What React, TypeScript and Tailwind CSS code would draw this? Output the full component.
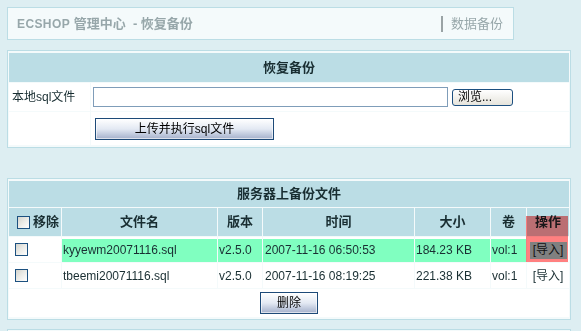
// App.tsx
const FONT = "font-['Liberation_Sans','Noto_Sans_CJK_SC',sans-serif]";

interface BackupFile {
  name: string;
  version: string;
  time: string;
  size: string;
  vol: string;
  hover?: boolean;
}

const FILES: BackupFile[] = [
  { name: "kyyewm20071116.sql", version: "v2.5.0", time: "2007-11-16 06:50:53", size: "184.23 KB", vol: "vol:1", hover: true },
  { name: "tbeemi20071116.sql", version: "v2.5.0", time: "2007-11-16 08:19:25", size: "221.38 KB", vol: "vol:1" },
];

function CheckBox() {
  return (
    <span className="inline-block h-[13px] w-[13px] shrink-0 border border-[#1c5180] bg-linear-to-br from-[#d4d4cd] via-[#ececE8] to-white" />
  );
}

function BlueButton({ label, width }: { label: string; width: string }) {
  return (
    <button
      type="button"
      className={`${width} h-[22px] border border-[#1d4a78] bg-linear-to-b from-white via-[#e3e9f3] to-[#a4b0cb] text-[12px] leading-none text-black shadow-[inset_0_0_0_1px_rgba(255,255,255,0.6)]`}
    >
      {label}
    </button>
  );
}

export default function App() {
  const th = "bg-[#BBDDE5] text-[13px] font-bold text-[#192E32]";
  const td = "px-px text-[12px] text-[#192E32] whitespace-nowrap";

  return (
    <div className={`${FONT} h-[331px] w-[581px] overflow-hidden bg-[#DDEEF2] pl-[7px] pt-[7px]`}>
      {/* title bar */}
      <div className="flex h-[33px] w-[507px] items-center justify-between border border-[#BBDDE5] bg-[#F4FAFB] pl-[9px] pr-[10px] text-[#97a7aa]">
        <h1 className="text-[13px] font-bold">
          <span className="text-[12px] tracking-[0.4px]">ECSHOP</span> 管理中心&nbsp; - 恢复备份
        </h1>
        <div className="flex items-center gap-[8px] text-[13px]">
          <span className="h-[16px] w-[2px] bg-[#9aa3a5]" />
          <span>数据备份</span>
        </div>
      </div>

      {/* upload panel */}
      <div className="mt-[10px] w-[564px] border border-[#BBDDE5] bg-[#F4FAFB] py-px">
        <table className="w-full table-fixed border-separate border-spacing-[1px]">
          <colgroup>
            <col className="w-[81px]" />
            <col className="w-[478px]" />
          </colgroup>
          <tbody>
            <tr>
              <th colSpan={2} className={`${th} h-[29px]`}>恢复备份</th>
            </tr>
            <tr>
              <td className={`${td} h-[28px] bg-white pl-[3px]`}>本地sql文件</td>
              <td className={`${td} bg-white pl-[2px]`}>
                <div className="flex items-center gap-[4px]">
                  <div className="h-[20px] w-[355px] border border-[#7F9DB9] bg-white" />
                  <button
                    type="button"
                    className="h-[17px] w-[61px] rounded-[3px] border border-[#1c4f80] bg-linear-to-b from-white to-[#e6e4dc] pl-[5px] text-left text-[12px] leading-none text-black"
                  >
                    浏览...
                  </button>
                </div>
              </td>
            </tr>
            <tr>
              <td className={`${td} h-[33px] bg-white`} />
              <td className={`${td} bg-white pl-[4px]`}>
                <BlueButton label="上传并执行sql文件" width="w-[179px]" />
              </td>
            </tr>
          </tbody>
        </table>
      </div>

      {/* server files panel */}
      <div className="relative mt-[30px] w-[564px] border border-[#BBDDE5] bg-[#F4FAFB] py-px">
        <table className="w-full table-fixed border-separate border-spacing-[1px]">
          <colgroup>
            <col className="w-[52px]" />
            <col className="w-[155px]" />
            <col className="w-[44px]" />
            <col className="w-[151px]" />
            <col className="w-[75px]" />
            <col className="w-[35px]" />
            <col className="w-[42px]" />
          </colgroup>
          <tbody>
            <tr>
              <th colSpan={7} className={`${th} h-[26px]`}>服务器上备份文件</th>
            </tr>
            <tr>
              <th className={`${th} h-[28px]`}>
                <div className="flex items-center gap-[3px] pl-[8px]">
                  <CheckBox />
                  <span>移除</span>
                </div>
              </th>
              <th className={th}>文件名</th>
              <th className={th}>版本</th>
              <th className={th}>时间</th>
              <th className={th}>大小</th>
              <th className={th}>卷</th>
              <th className={th}>操作</th>
            </tr>
            {FILES.map((f) => {
              const cell = f.hover
                ? `${td} bg-[#80FFC0] shadow-[inset_0_2px_0_#ffffff]`
                : `${td} bg-white`;
              return (
                <tr key={f.name}>
                  <td className={`${td} h-[25px] bg-white pl-[6px]`}>
                    <div className="flex items-center">
                      <CheckBox />
                    </div>
                  </td>
                  <td className={cell}>{f.name}</td>
                  <td className={cell}>{f.version}</td>
                  <td className={`${cell} pl-[2px]`}>{f.time}</td>
                  <td className={cell}>{f.size}</td>
                  <td className={cell}>{f.vol}</td>
                  <td className={`${td} bg-white text-center`}>
                    {f.hover ? (
                      <span className="relative z-10 inline-block h-[17px] w-[37px] bg-[#808080] text-center leading-[17px] text-[#111]">
                        [导入]
                      </span>
                    ) : (
                      "[导入]"
                    )}
                  </td>
                </tr>
              );
            })}
            <tr>
              <td colSpan={7} className={`${td} h-[28px] bg-white text-center`}>
                <BlueButton label="删除" width="w-[58px]" />
              </td>
            </tr>
          </tbody>
        </table>
        {/* hover overlay on the action column */}
        <div className="pointer-events-none absolute left-[518px] top-[37px] z-[1] h-[46px] w-[42px] bg-[#ff8080] mix-blend-multiply" />
      </div>

      <div className="mt-[9px] h-[20px] w-[564px] border border-[#BBDDE5] bg-[#F4FAFB]" />
    </div>
  );
}
